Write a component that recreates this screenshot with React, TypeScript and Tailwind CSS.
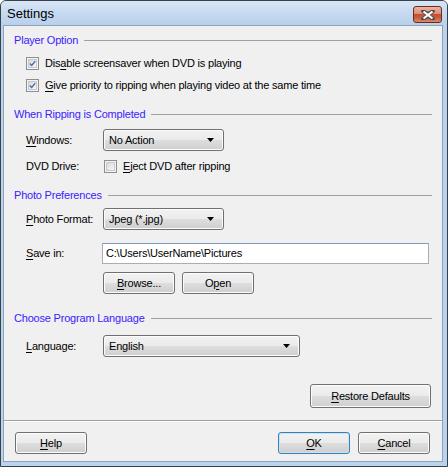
import React from 'react';

const btnBg =
  'bg-[linear-gradient(to_bottom,#f2f2f2_0%,#ebebeb_48%,#dddddd_52%,#cfcfcf_100%)]';

function Mn({ text, idx }: { text: string; idx: number }) {
  return (
    <>
      {text.slice(0, idx)}
      <span className="underline underline-offset-[2px]">{text[idx]}</span>
      {text.slice(idx + 1)}
    </>
  );
}

function GroupHeader({ title, mt }: { title: string; mt: string }) {
  return (
    <div className={`flex items-center h-[14px] ${mt}`}>
      <span className="text-[#3a22ff] whitespace-nowrap">{title}</span>
      <div className="flex-1 h-px bg-[#a0a0a0] ml-[6px] mt-[1px]" />
    </div>
  );
}

function CheckBox({ checked }: { checked?: boolean }) {
  return (
    <div className="w-[13px] h-[13px] border border-[#8e8f8f] bg-[#f4f4f4] flex items-center justify-center shrink-0">
      <div className="w-[9px] h-[9px] border border-[#c9c9c9] bg-[linear-gradient(135deg,#d9d9d9,#f7f7f7)] flex items-center justify-center">
        {checked && (
          <svg width="9" height="9" viewBox="0 0 9 9">
            <path d="M1 4.5 L3.5 7 L8 1.5" stroke="#3c6fb0" strokeWidth="1.8" fill="none" />
          </svg>
        )}
      </div>
    </div>
  );
}

function Dropdown({ value, width }: { value: string; width: string }) {
  return (
    <div
      className={`${width} h-[22px] border border-[#707070] rounded-[3px] ${btnBg} flex items-center pl-[5px] pr-[9px] shadow-[inset_0_0_0_1px_#fcfcfc]`}
    >
      <span className="flex-1">{value}</span>
      <svg width="7" height="4" viewBox="0 0 7 4">
        <path d="M0 0 H7 L3.5 4 Z" fill="#000" />
      </svg>
    </div>
  );
}

function Button({ children, width, def }: { children: React.ReactNode; width: string; def?: boolean }) {
  return (
    <div
      className={`${width} h-[22px] rounded-[3px] border ${
        def ? 'border-[#3c7fb1] shadow-[inset_0_0_0_1px_#c4e5f6]' : 'border-[#707070] shadow-[inset_0_0_0_1px_#fcfcfc]'
      } ${btnBg} flex items-center justify-center`}
    >
      {children}
    </div>
  );
}

export default function App() {
  return (
    <div
      className="w-[448px] h-[467px] bg-white"
      style={{ fontFamily: '"Liberation Sans", Arial, sans-serif' }}
    >
      <div className="w-[448px] h-[467px] border border-[#38404a] rounded-t-[6px] bg-[#bcd3ec] flex flex-col overflow-hidden">
        {/* Title bar */}
        <div className="h-[24px] shrink-0 flex items-center bg-[linear-gradient(to_bottom,#d8e6f5_0%,#c6daf0_50%,#b9d0ea_100%)] pl-[6px] pr-[5px]">
          <span className="text-[13px] text-black flex-1 mt-[2px]">Settings</span>
          <div className="w-[29px] h-[17px] mt-[3px] rounded-[3px] border border-[#6e2a1e] bg-[linear-gradient(to_bottom,#ecb5a6_0%,#dd8b74_45%,#c4502f_50%,#c85d3d_70%,#d78a70_100%)] flex items-center justify-center">
            <svg width="14" height="10" viewBox="0 0 14 10">
              <path
                d="M2 1 L7 4 L12 1 M2 9 L7 6 L12 9 M2 1 L12 9 M12 1 L2 9"
                stroke="#4a4a4a"
                strokeWidth="3.6"
                fill="none"
                strokeLinecap="round"
              />
              <path d="M2.5 1.5 L11.5 8.5 M11.5 1.5 L2.5 8.5" stroke="#fff" strokeWidth="2.2" fill="none" />
            </svg>
          </div>
        </div>

        {/* Client area */}
        <div className="flex-1 ml-[2px] mr-[4px] mb-[4px] border border-[#8ba3bf] bg-[#f0f0f0] flex flex-col text-[11px] tracking-[-0.2px] text-black">
          <div className="flex flex-col px-[10px]">
            <GroupHeader title="Player Option" mt="mt-[7px]" />
            <div className="flex items-center h-[14px] mt-[9px] pl-[12px] gap-[6px]">
              <CheckBox checked />
              <span>
                <Mn text="Disable screensaver when DVD is playing" idx={3} />
              </span>
            </div>
            <div className="flex items-center h-[14px] mt-[8px] pl-[12px] gap-[6px]">
              <CheckBox checked />
              <span>
                <Mn text="Give priority to ripping when playing video at the same time" idx={0} />
              </span>
            </div>

            <GroupHeader title="When Ripping is Completed" mt="mt-[15px]" />
            <div className="flex items-center h-[22px] mt-[8px] pl-[12px]">
              <span className="w-[77px]">
                <Mn text="Windows:" idx={0} />
              </span>
              <Dropdown value="No Action" width="w-[121px]" />
            </div>
            <div className="flex items-center h-[14px] mt-[8px] pl-[12px]">
              <span className="w-[78px]">DVD Drive:</span>
              <CheckBox />
              <span className="ml-[6px]">
                <Mn text="Eject DVD after ripping" idx={0} />
              </span>
            </div>

            <GroupHeader title="Photo Preferences" mt="mt-[15px]" />
            <div className="flex items-center h-[22px] mt-[6px] pl-[12px]">
              <span className="w-[77px]">
                <Mn text="Photo Format:" idx={0} />
              </span>
              <Dropdown value="Jpeg (*.jpg)" width="w-[121px]" />
            </div>
            <div className="flex items-center h-[22px] mt-[12px] pl-[12px]">
              <span className="w-[76px]">
                <Mn text="Save in:" idx={0} />
              </span>
              <div className="w-[327px] h-[21px] border border-[#abadb3] border-t-[#7a9cc0] bg-white flex items-center pl-[3px]">
                C:\Users\UserName\Pictures
              </div>
            </div>
            <div className="flex items-center h-[22px] mt-[8px] pl-[89px] gap-[7px]">
              <Button width="w-[72px]">
                <Mn text="Browse..." idx={0} />
              </Button>
              <Button width="w-[72px]">
                <Mn text="Open" idx={1} />
              </Button>
            </div>

            <GroupHeader title="Choose Program Language" mt="mt-[17px]" />
            <div className="flex items-center h-[22px] mt-[10px] pl-[12px]">
              <span className="w-[77px]">
                <Mn text="Language:" idx={0} />
              </span>
              <Dropdown value="English" width="w-[197px]" />
            </div>

            <div className="flex justify-end mt-[27px] pr-[1px]">
              <div className="w-[121px] h-[24px] rounded-[3px] border border-[#707070] shadow-[inset_0_0_0_1px_#fcfcfc] bg-[linear-gradient(to_bottom,#f2f2f2_0%,#ebebeb_48%,#dddddd_52%,#cfcfcf_100%)] flex items-center justify-center">
                <Mn text="Restore Defaults" idx={0} />
              </div>
            </div>
          </div>

          <div className="mt-[12px] h-px bg-[#a0a0a0]" />
          <div className="h-px bg-white" />

          <div className="flex items-center mt-[10px] pl-[11px] pr-[12px]">
            <Button width="w-[72px]">
              <Mn text="Help" idx={0} />
            </Button>
            <div className="flex-1" />
            <Button width="w-[72px]" def>
              <Mn text="OK" idx={0} />
            </Button>
            <div className="w-[8px]" />
            <Button width="w-[72px]">
              <Mn text="Cancel" idx={0} />
            </Button>
          </div>
        </div>
      </div>
    </div>
  );
}
